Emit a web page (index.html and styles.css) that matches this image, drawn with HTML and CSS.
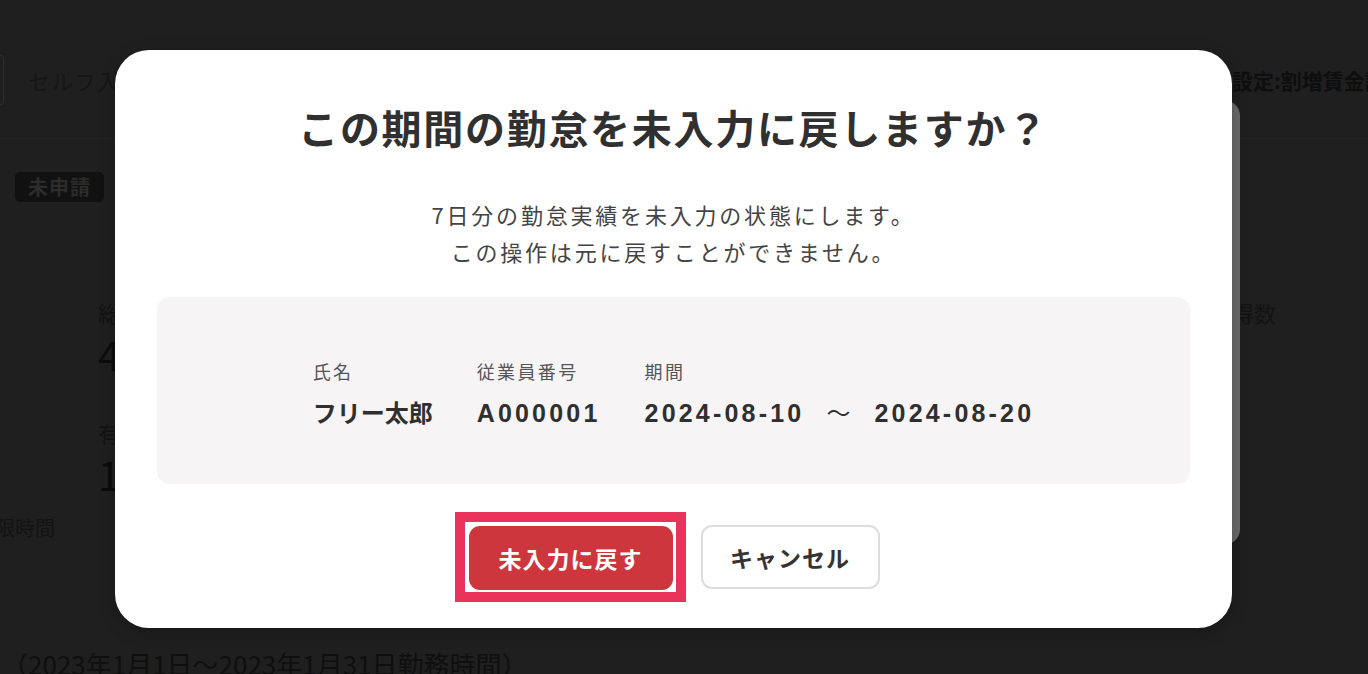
FILE: index.html
```html
<!DOCTYPE html>
<html lang="ja">
<head>
<meta charset="utf-8">
<title>勤怠を未入力に戻す</title>
<link rel="stylesheet" href="styles.css">
</head>
<body>
<div class="page">
  <div class="topbar">
    <div class="select-edge"></div>
    <div class="mode">セルフ入力</div>
    <div class="settings">設定:割増賃金設定</div>
  </div>
  <div class="divider"></div>
  <div class="badge-row"><span class="badge">未申請</span></div>
  <div class="summary">
    <div class="summary-col">
      <div class="s-label">総労働時間</div>
      <div class="s-value">40:00</div>
      <div class="s-label s-gap">有給休暇</div>
      <div class="s-value">1日</div>
    </div>
    <div class="summary-right">
      <div class="s-label">取得数</div>
    </div>
  </div>
  <div class="overtime">上限時間</div>
  <div class="period">（2023年1月1日〜2023年1月31日勤務時間）</div>

  <div class="overlay">
    <div class="back-panel"></div>
    <div class="dialog" role="dialog">
      <h1 class="title">この期間の勤怠を未入力に戻しますか？</h1>
      <p class="desc">7日分の勤怠実績を未入力の状態にします。<br>この操作は元に戻すことができません。</p>
      <div class="info">
        <div class="info-col">
          <div class="info-label">氏名</div>
          <div class="info-value">フリー太郎</div>
        </div>
        <div class="info-col">
          <div class="info-label">従業員番号</div>
          <div class="info-value"><span class="num">A000001</span></div>
        </div>
        <div class="info-col">
          <div class="info-label">期間</div>
          <div class="info-value"><span class="num">2024-08-10</span><span class="tilde">〜</span><span class="num">2024-08-20</span></div>
        </div>
      </div>
      <div class="actions">
        <span class="focus-ring"><button class="btn btn-danger">未入力に戻す</button></span>
        <button class="btn btn-cancel">キャンセル</button>
      </div>
    </div>
  </div>
</div>
</body>
</html>
```

FILE: styles.css
```css
* { box-sizing: border-box; }
html, body { margin: 0; padding: 0; }
body {
  font-family: "Noto Sans CJK JP", "Noto Sans", sans-serif;
  background: #1f1f1f;
}
.page {
  position: relative;
  width: 1368px;
  height: 674px;
  overflow: hidden;
  background: #1f1f1f;
  color: #141414;
  padding-top: 55px;
}
.topbar {
  display: flex;
  align-items: center;
  height: 50px;
}
.select-edge {
  width: 4px;
  height: 50px;
  border: 1px solid #2c2c2c;
  border-left: none;
  border-radius: 0 6px 6px 0;
  flex: none;
}
.mode {
  flex: 1;
  margin-left: 24px;
  font-size: 22px;
  letter-spacing: 1px;
  color: #161616;
}
.settings {
  flex: none;
  width: 136px;
  white-space: nowrap;
  font-size: 21px;
  font-weight: 700;
  color: #0e0e0e;
}
.divider {
  margin-top: 33px;
  height: 1px;
  background: #242424;
}
.badge-row {
  margin-top: 33px;
  padding-left: 15px;
  height: 30px;
}
.badge {
  display: inline-block;
  height: 30px;
  line-height: 30px;
  padding: 0 13px;
  border-radius: 5px;
  background: #111111;
  color: #2c2c2c;
  font-size: 20px;
  font-weight: 700;
  letter-spacing: 1px;
}
.summary {
  display: flex;
  justify-content: space-between;
  margin-top: 98px;
  padding-left: 98px;
}
.summary-right { width: 158px; }
.s-label {
  font-size: 22px;
  line-height: 24px;
  color: #131313;
  white-space: nowrap;
}
.s-value {
  font-size: 40px;
  line-height: 44px;
  margin-top: 8px;
  color: #0c0c0c;
}
.s-gap { margin-top: 44px; }
.overtime {
  margin-top: 20px;
  margin-left: -25px;
  font-size: 20px;
  line-height: 24px;
  color: #131313;
}
.period {
  margin-top: 108px;
  margin-left: 2px;
  font-size: 26px;
  line-height: 32px;
  color: #0f0f0f;
  white-space: nowrap;
}

/* overlay & dialog */
.overlay {
  position: absolute;
  inset: 0;
  padding: 50px 0 0 115px;
}
.back-panel {
  position: absolute;
  left: 1180px;
  top: 100px;
  width: 60px;
  height: 445px;
  background: #6a6a6a;
  border-radius: 16px;
}
.dialog {
  position: relative;
  width: 1117px;
  background: #ffffff;
  border-radius: 34px;
  padding: 49px 42px 26px;
  box-shadow: 0 4px 16px rgba(0,0,0,0.25);
  text-align: center;
}
.title {
  margin: 0;
  font-size: 40px;
  line-height: 56px;
  font-weight: 700;
  letter-spacing: 1.7px;
  color: #303030;
}
.desc {
  margin: 41px 0 0;
  font-size: 22px;
  line-height: 37px;
  letter-spacing: 2.8px;
  color: #444444;
}
.info {
  margin-top: 27px;
  height: 187px;
  background: #f6f4f5;
  border-radius: 13px;
  display: flex;
  justify-content: center;
  align-items: center;
  gap: 44px;
  text-align: left;
  padding-top: 4px;
}
.info-label {
  font-size: 18px;
  line-height: 26px;
  letter-spacing: 2.4px;
  color: #555555;
}
.info-value {
  margin-top: 13px;
  font-size: 24px;
  line-height: 30px;
  font-weight: 700;
  color: #2f2f2f;
  white-space: nowrap;
}
.num {
  font-family: "Liberation Sans", "Noto Sans", sans-serif;
  font-size: 25px;
  letter-spacing: 3.2px;
}
.tilde {
  display: inline-block;
  margin: 0 24px 0 22px;
  font-weight: 400;
}
.actions {
  margin-top: 28px;
  display: flex;
  justify-content: center;
  align-items: center;
  gap: 15px;
  padding-right: 13px;
}
.focus-ring {
  display: flex;
  border: 10px solid #e8335a;
  padding: 4px 3px 2px 4px;
  background: #ffffff;
}
.btn {
  height: 64px;
  border-radius: 11px;
  font-family: inherit;
  font-size: 23px;
  font-weight: 700;
  letter-spacing: 1px;
  cursor: pointer;
}
.btn-danger {
  width: 204px;
  background: #cc363c;
  border: none;
  color: #ffffff;
}
.btn-cancel {
  width: 179px;
  background: #ffffff;
  border: 2px solid #dddddd;
  color: #333333;
}
```
